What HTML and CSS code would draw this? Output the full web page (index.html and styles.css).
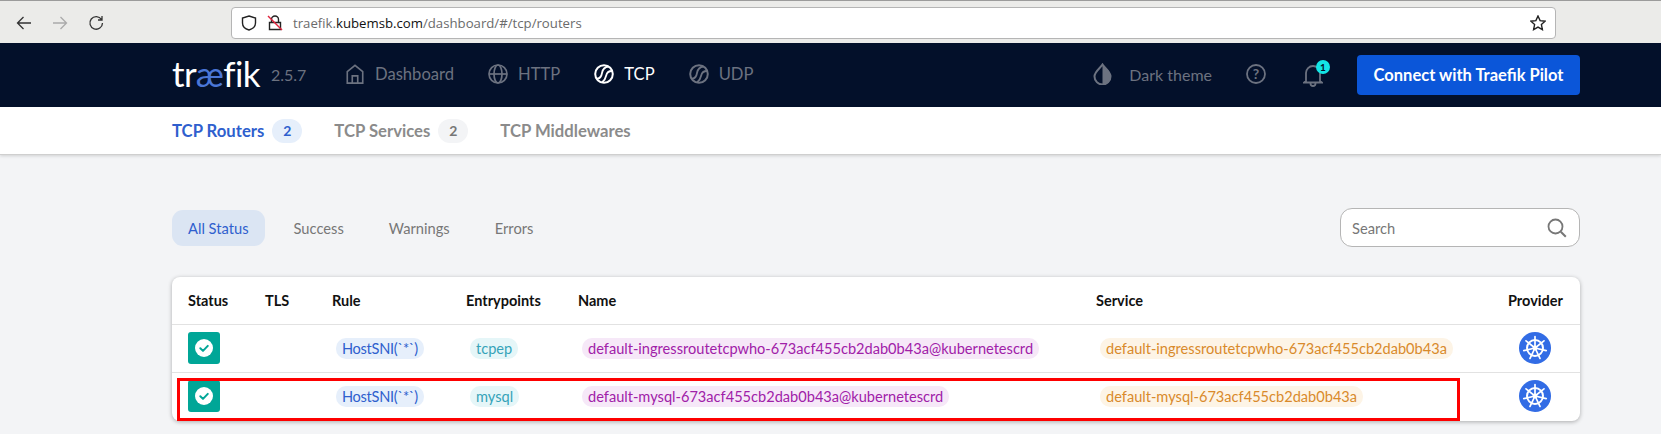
FILE: index.html
```html
<!DOCTYPE html>
<html lang="en">
<head>
<meta charset="UTF-8" />
<title>Traefik - TCP Routers</title>
<link rel="stylesheet" href="styles.css">
</head>
<body>
<svg class="defs" width="0" height="0">
  <symbol id="i-ball" viewBox="0 0 20 20">
    <circle cx="10" cy="10" r="8.800" fill="none" stroke="currentColor" stroke-width="2"/>
    <path d="M14.500 2.500C10 3 8.500 6 8 9s-1.500 6-5.500 5.500M18 7c-3 0-5.200 1.500-5.800 4.500s-1.700 5-4.200 7" fill="none" stroke="currentColor" stroke-width="1.800"/>
  </symbol>
  <symbol id="i-helm" viewBox="0 0 32 32">
    <circle cx="16" cy="16" r="16" fill="#326ce5"/>
    <g fill="none" stroke="#fff" stroke-linecap="round">
      <circle cx="16" cy="16" r="8" stroke-width="2"/>
      <path stroke-width="1.700" d="M16 16V4.500M16 16L25 8.800M16 16L27.200 18.600M16 16L21 26.400M16 16L11 26.400M16 16L4.800 18.600M16 16L7 8.800"/>
    </g>
    <circle cx="16" cy="16" r="2.400" fill="#fff"/>
  </symbol>
  <symbol id="i-check" viewBox="0 0 32 32">
    <circle cx="16" cy="16" r="9" fill="#fff"/>
    <path d="M12.300 16.200l2.700 2.700 4.800-5" fill="none" stroke="#00a697" stroke-width="2" stroke-linecap="round" stroke-linejoin="round"/>
  </symbol>
</svg>

<div class="browser">
  <div class="browser-btns">
    <svg class="b-icon" viewBox="0 0 16 16"><path d="M15 8H1.500M7.500 2L1.500 8l6 6"/></svg>
    <svg class="b-icon off" viewBox="0 0 16 16"><path d="M1 8h13.500M8.500 2l6 6-6 6"/></svg>
    <svg class="b-icon" viewBox="0 0 16 16"><path d="M13.500 4.500A6.300 6.300 0 1 0 14.500 8M14 1v4h-4"/></svg>
  </div>
  <div class="urlbar">
    <svg class="u-icon" viewBox="0 0 16 16"><path d="M8 1l6.500 2v5c0 3.500-3 6-6.500 7-3.500-1-6.500-3.500-6.500-7V3z"/></svg>
    <svg class="u-icon lock" viewBox="0 0 16 16"><path d="M4.500 7V4.500a3.500 3.500 0 0 1 7 0V7M2.500 7.500h11v7h-11z"/><path class="slash" d="M1 1l14 14"/></svg>
    <span class="url">traefik.<b>kubemsb.com</b>/dashboard/#/tcp/routers</span>
    <svg class="u-icon star" viewBox="0 0 16 16"><path d="M8 1l2.100 4.600 5 .6-3.700 3.400 1 5L8 12.100l-4.400 2.500 1-5L.9 6.200l5-.6z"/></svg>
  </div>
</div>

<nav class="topnav">
  <div class="logo">tr<span>æ</span>fik</div>
  <span class="version">2.5.7</span>
  <a class="nav-item">
    <svg class="nav-icon" viewBox="0 0 20 22"><path d="M1.500 21V8.500L10 1.500l8.500 7V21zM7 21v-8h6v8" fill="none" stroke="currentColor" stroke-width="1.800"/></svg>
    Dashboard
  </a>
  <a class="nav-item">
    <svg class="nav-icon" viewBox="0 0 20 20"><g fill="none" stroke="currentColor" stroke-width="1.700"><circle cx="10" cy="10" r="9"/><ellipse cx="10" cy="10" rx="4" ry="9"/><path d="M1 10h18"/></g></svg>
    HTTP
  </a>
  <a class="nav-item active"><svg class="nav-icon"><use href="#i-ball"/></svg>TCP</a>
  <a class="nav-item"><svg class="nav-icon"><use href="#i-ball"/></svg>UDP</a>
  <div class="nav-right">
    <a class="nav-item theme">
      <svg class="drop" viewBox="0 0 19 22"><path d="M9.500 1.500c2.500 4 8 7 8 12a8 8 0 0 1-16 0c0-5 5.500-8 8-12z" fill="none" stroke="currentColor" stroke-width="2"/><path d="M9.500 1c2.700 4.200 8.500 7.300 8.500 12.500a8.500 8.500 0 0 1-8.500 8.500z" fill="currentColor"/></svg>
      Dark theme
    </a>
    <svg class="help" viewBox="0 0 20 20"><circle cx="10" cy="10" r="9" fill="none" stroke="currentColor" stroke-width="1.800"/><text x="10" y="15" text-anchor="middle">?</text></svg>
    <div class="bell">
      <svg viewBox="0 0 20 24"><path d="M3 18v-8a7 7 0 0 1 14 0v8l2 1.500H1zM7.500 20.500a2.500 2.500 0 0 0 5 0" fill="none" stroke="currentColor" stroke-width="1.800"/></svg>
      <span class="bell-badge">1</span>
    </div>
    <button class="pilot">Connect with Traefik Pilot</button>
  </div>
</nav>

<div class="subnav">
  <a class="tab active">TCP Routers <span class="tab-badge">2</span></a>
  <a class="tab">TCP Services <span class="tab-badge">2</span></a>
  <a class="tab">TCP Middlewares</a>
</div>

<main class="page">
  <div class="toolbar">
    <div class="filters">
      <a class="filter active">All Status</a>
      <a class="filter">Success</a>
      <a class="filter">Warnings</a>
      <a class="filter">Errors</a>
    </div>
    <div class="search">
      <span>Search</span>
      <svg viewBox="0 0 20 20"><circle cx="8.500" cy="8.500" r="7" fill="none" stroke="currentColor" stroke-width="1.800"/><path d="M13.800 13.800l5 5" stroke="currentColor" stroke-width="2"/></svg>
    </div>
  </div>

  <div class="card">
    <table>
      <colgroup>
        <col class="c-status"><col class="c-tls"><col class="c-rule"><col class="c-entry"><col class="c-name"><col class="c-service"><col class="c-provider">
      </colgroup>
      <thead>
        <tr><th>Status</th><th>TLS</th><th>Rule</th><th>Entrypoints</th><th>Name</th><th>Service</th><th>Provider</th></tr>
      </thead>
      <tbody>
        <tr>
          <td><span class="status"><svg><use href="#i-check"/></svg></span></td>
          <td></td>
          <td><span class="chip blue">HostSNI(`*`)</span></td>
          <td><span class="chip teal">tcpep</span></td>
          <td><span class="chip purple">default-ingressroutetcpwho-673acf455cb2dab0b43a@kubernetescrd</span></td>
          <td><span class="chip orange">default-ingressroutetcpwho-673acf455cb2dab0b43a</span></td>
          <td class="prov"><svg class="helm"><use href="#i-helm"/></svg></td>
        </tr>
        <tr>
          <td><span class="status"><svg><use href="#i-check"/></svg></span></td>
          <td></td>
          <td><span class="chip blue">HostSNI(`*`)</span></td>
          <td><span class="chip teal">mysql</span></td>
          <td><span class="chip purple">default-mysql-673acf455cb2dab0b43a@kubernetescrd</span></td>
          <td><span class="chip orange">default-mysql-673acf455cb2dab0b43a</span></td>
          <td class="prov"><svg class="helm"><use href="#i-helm"/></svg></td>
        </tr>
      </tbody>
    </table>
    <div class="highlight"></div>
  </div>
</main>
</body>
</html>
```

FILE: styles.css
```css
* {
  box-sizing: border-box;
}
html, body {
  height: 100%;
}
body {
  margin: 0;
  overflow: hidden;
  background-color: #f3f4f6;
  font-family: 'Lato', 'Noto Sans', sans-serif;
  color: #111;
}
.defs {
  position: absolute;
}

/* browser chrome */
.browser {
  height: 43px;
  display: flex;
  align-items: center;
  padding-top: 1px;
  background-color: #ebebe9;
  border-top: 1px solid #9b9b9b;
}
.browser-btns {
  width: 231px;
  padding-left: 16px;
  display: flex;
  gap: 20px;
}
.b-icon {
  width: 16px;
  height: 16px;
  fill: none;
  stroke: #333;
  stroke-width: 1.3;
}
.b-icon.off {
  stroke: #aaa;
}
.urlbar {
  width: 1325px;
  height: 32px;
  display: flex;
  align-items: center;
  gap: 11px;
  padding: 0 9px 0 9px;
  background: white;
  border: 1px solid #b5b5b5;
  border-radius: 4px;
}
.u-icon {
  width: 16px;
  height: 16px;
  fill: none;
  stroke: #222;
  stroke-width: 1.4;
}
.u-icon.lock {
  margin-left: -1px;
}
.u-icon .slash {
  stroke: #e0233d;
}
.u-icon.star {
  margin-left: auto;
}
.url {
  margin-left: -1px;
  font-family: 'Open Sans', sans-serif;
  font-size: 13.2px;
  color: #6b6b6b;
}
.url b {
  font-weight: 400;
  color: #111;
}

/* top nav */
.topnav {
  height: 64px;
  display: flex;
  align-items: center;
  padding: 0 81px 0 172px;
  background-color: #03102a;
}
.logo {
  width: 99px;
  font-size: 35px;
  font-weight: 400;
  line-height: 1;
  letter-spacing: -0.6px;
  color: white;
  margin-top: -3px;
}
.logo span {
  color: #4a76d6;
}
.version {
  width: 74px;
  font-size: 16px;
  color: #6c7280;
  margin-top: -2px;
}
.nav-item {
  display: flex;
  align-items: center;
  gap: 10px;
  margin-right: 34px;
  font-size: 16.6px;
  color: #6c7280;
  margin-top: -2px;
}
.nav-item.active {
  color: white;
}
.nav-icon {
  width: 20px;
  height: 20px;
}
.nav-right {
  margin-left: auto;
  display: flex;
  align-items: center;
}
.nav-item.theme {
  gap: 17px;
  margin-right: 34px;
  font-size: 16px;
}
.drop {
  width: 19px;
  height: 22px;
}
.help {
  width: 20px;
  height: 20px;
  margin-right: 37px;
  color: #6c7280;
  margin-top: -2px;
}
.help text {
  font-family: 'Lato', sans-serif;
  font-size: 14px;
  font-weight: 700;
  fill: #6c7280;
}
.bell {
  position: relative;
  width: 20px;
  height: 24px;
  margin-right: 34px;
  color: #6c7280;
}
.bell svg {
  width: 20px;
  height: 24px;
}
.bell-badge {
  position: absolute;
  top: -3px;
  right: -7px;
  width: 14px;
  height: 14px;
  border-radius: 50%;
  background-color: #13e5e5;
  color: #03102a;
  font-size: 10px;
  font-weight: 700;
  line-height: 14px;
  text-align: center;
}
.pilot {
  width: 223px;
  height: 40px;
  background-color: #0b56d9;
  color: white;
  border: none;
  border-radius: 4px;
  font-family: inherit;
  font-size: 16.5px;
  font-weight: 700;
}

/* sub nav */
.subnav {
  height: 48px;
  display: flex;
  align-items: center;
  gap: 32px;
  padding-left: 172px;
  background: white;
  border-bottom: 1px solid #cfcfcf;
  box-shadow: 0 1px 3px rgba(0,0,0,0.15);
}
.tab {
  display: flex;
  align-items: center;
  gap: 8px;
  font-size: 16.7px;
  font-weight: 700;
  color: #8b8b8b;
}
.tab.active {
  color: #2f5fce;
}
.tab-badge {
  width: 30px;
  height: 24px;
  border-radius: 12px;
  background-color: #f3f4f6;
  color: #777;
  font-size: 14px;
  line-height: 24px;
  text-align: center;
}
.tab.active .tab-badge {
  background-color: #e6effb;
  color: #2f5fce;
}

/* content */
.page {
  padding: 53px 81px 0 172px;
}
.toolbar {
  height: 69px;
  display: flex;
  justify-content: space-between;
  align-items: flex-start;
}
.filters {
  display: flex;
  align-items: center;
  margin-top: 2px;
}
.filter {
  height: 36px;
  padding: 0 16px;
  margin-right: 13px;
  border-radius: 11px;
  font-size: 14.7px;
  line-height: 36px;
  color: #777;
}
.filter.active {
  background-color: #dbe5f3;
  color: #2f5fce;
}
.search {
  width: 240px;
  height: 39px;
  display: flex;
  align-items: center;
  justify-content: space-between;
  padding: 0 12px 0 11px;
  background: white;
  border: 1px solid #b5b5b5;
  border-radius: 12px;
  font-size: 14.7px;
  color: #777;
}
.search svg {
  width: 20px;
  height: 20px;
}
.card {
  position: relative;
  height: 144px;
  background: white;
  border-radius: 8px;
  box-shadow: 0 1px 4px rgba(0,0,0,0.3);
}
table {
  width: 100%;
  table-layout: fixed;
  border-collapse: collapse;
}
.c-status { width: 77px; }
.c-tls { width: 67px; }
.c-rule { width: 134px; }
.c-entry { width: 112px; }
.c-name { width: 518px; }
.c-service { width: 412px; }
.c-provider { width: 88px; }
th {
  height: 47px;
  padding: 0 0 0 16px;
  border-bottom: 1px solid #e2e2e2;
  font-size: 14.5px;
  font-weight: 700;
  text-align: left;
}
td {
  height: 48px;
  padding: 0 0 0 16px;
  border-bottom: 1px solid #e2e2e2;
  white-space: nowrap;
}
tbody tr:last-child td {
  border-bottom: none;
}
td.prov {
  padding: 0 0 0 27px;
}
.status {
  display: block;
  width: 32px;
  height: 32px;
  border-radius: 3px;
  background-color: #00a697;
}
.status svg, .helm {
  display: block;
  width: 32px;
  height: 32px;
}
.chip {
  display: inline-block;
  height: 21px;
  margin-left: 4px;
  padding: 0 6px;
  border-radius: 10px;
  font-size: 14.6px;
  line-height: 21px;
}
.chip.blue { background-color: #e6effb; color: #2f5fce; letter-spacing: -0.3px; }
.chip.teal { background-color: #e5f6f8; color: #35a3b8; }
.chip.purple { background-color: #f6e8f8; color: #a020a8; }
.chip.orange { background-color: #fdf4e6; color: #d98a2b; }
.highlight {
  position: absolute;
  left: 5px;
  top: 101px;
  width: 1283px;
  height: 43px;
  border: 3px solid #fe0000;
}
```
